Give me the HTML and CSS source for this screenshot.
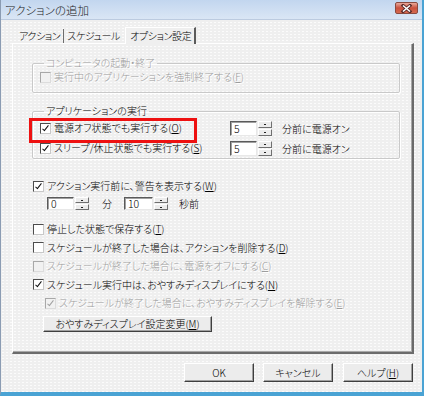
FILE: index.html
```html
<!DOCTYPE html>
<html lang="ja">
<head>
  <meta charset="UTF-8">
  <title>アクションの追加</title>
  <link rel="stylesheet" href="styles.css">
</head>
<body>
  <div class="window">
    <div class="titlebar">
      <span class="title">アクションの追加</span>
      <span class="close-btn">
        <svg width="13" height="9" viewBox="0 0 13 9">
          <path d="M3 1.5 L10 7.5 M10 1.5 L3 7.5" stroke="#5a2a2a" stroke-width="3.2" stroke-linecap="square"/>
          <path d="M3 1.5 L10 7.5 M10 1.5 L3 7.5" stroke="#fff" stroke-width="1.6"/>
        </svg>
      </span>
    </div>

    <div class="client">
      <!-- Tabs -->
      <div class="tabs">
        <span class="tab">アクション</span>
        <span class="tab">スケジュール</span>
        <span class="tab active">オプション設定</span>
      </div>

      <div class="panel">
        <fieldset class="group">
          <legend class="disabled">コンピュータの起動・終了</legend>
          <label class="check disabled"><span class="box"></span>実行中のアプリケーションを強制終了する(<u>F</u>)</label>
        </fieldset>

        <fieldset class="group">
          <legend>アプリケーションの実行</legend>
          <div class="app-row">
            <label class="check highlight"><span class="box checked"></span>電源オフ状態でも実行する(<u>O</u>)</label>
            <div class="spinner">
              <span class="field">5</span>
              <span class="spin-btns"><span class="up"></span><span class="down"></span></span>
            </div>
            <span class="unit">分前に電源オン</span>
          </div>
          <div class="app-row">
            <label class="check"><span class="box checked"></span>スリープ/休止状態でも実行する(<u>S</u>)</label>
            <div class="spinner">
              <span class="field">5</span>
              <span class="spin-btns"><span class="up"></span><span class="down"></span></span>
            </div>
            <span class="unit">分前に電源オン</span>
          </div>
        </fieldset>

        <label class="check row warn"><span class="box checked"></span>アクション実行前に、警告を表示する(<u>W</u>)</label>
        <div class="time-row">
          <div class="spinner">
            <span class="field">0</span>
            <span class="spin-btns"><span class="up"></span><span class="down"></span></span>
          </div>
          <span class="unit-min">分</span>
          <div class="spinner">
            <span class="field">10</span>
            <span class="spin-btns"><span class="up"></span><span class="down"></span></span>
          </div>
          <span class="unit-sec">秒前</span>
        </div>

        <div class="options">
          <label class="check row"><span class="box"></span>停止した状態で保存する(<u>T</u>)</label>
          <label class="check row"><span class="box"></span>スケジュールが終了した場合は、アクションを削除する(<u>D</u>)</label>
          <label class="check row disabled"><span class="box"></span>スケジュールが終了した場合に、電源をオフにする(<u>C</u>)</label>
          <label class="check row"><span class="box checked"></span>スケジュール実行中は、おやすみディスプレイにする(<u>N</u>)</label>
          <label class="check row sub disabled"><span class="box checked"></span>スケジュールが終了した場合に、おやすみディスプレイを解除する(<u>E</u>)</label>
        </div>
        <button class="btn display-btn">おやすみディスプレイ設定変更(<u>M</u>)</button>
      </div>

      <div class="actions">
        <button class="btn">OK</button>
        <button class="btn">キャンセル</button>
        <button class="btn">ヘルプ(<u>H</u>)</button>
      </div>
    </div>
  </div>
</body>
</html>
```

FILE: styles.css
```css
* {
  box-sizing: border-box;
}

body {
  margin: 0;
  font-family: "Noto Sans CJK JP", "Noto Sans", sans-serif;
  font-size: 10px;
  font-weight: 300;
  font-feature-settings: "palt";
  color: #000;
  background: #fff;
}

.window {
  width: 424px;
  height: 396px;
  display: flex;
  flex-direction: column;
  background-color: #efefef;
  background-image: radial-gradient(circle, #fbfbfb 0.7px, transparent 0.8px);
  background-size: 4px 3px;
  border-left: 1px solid #8b9cb3;
  border-right: 2px solid #4aa3d4;
  border-bottom: 4px solid #4aa3d4;
}

.titlebar {
  height: 20px;
  display: flex;
  align-items: center;
  justify-content: space-between;
  padding: 0 4px 0 4px;
  background: linear-gradient(#c2d6ef, #dae6f5);
  border-bottom: 1px solid #bccbe0;
}

.title {
  font-size: 11.5px;
  line-height: 14px;
  color: #1a1a1a;
}

.close-btn {
  width: 23px;
  height: 12px;
  margin-top: -3px;
  display: flex;
  align-items: center;
  justify-content: center;
  border: 1px solid #8a4a40;
  border-radius: 2px;
  background: linear-gradient(#e9a99b, #c9503e 50%, #d66a4f);
}

.client {
  flex: 1;
  padding: 6px 8px 0 11px;
  display: flex;
  flex-direction: column;
}

/* Tabs */
.tabs {
  display: flex;
  align-items: flex-end;
  height: 17px;
  padding-left: 4px;
}

.tab {
  height: 14px;
  line-height: 14px;
  padding: 0 3px 0 3px;
  font-size: 10px;
  letter-spacing: -0.4px;
}

.tab:first-child {
  border-right: 1px solid #6d6d6d;
}

.tab.active {
  height: 17px;
  line-height: 16px;
  margin-left: 2px;
  margin-bottom: -1px;
  padding: 0 3px 0 4px;
  border-left: 1px solid #fff;
  border-top: 1px solid #fff;
  border-right: 2px solid #5b5b5b;
  background: #efefef;
  position: relative;
  z-index: 1;
}

.panel {
  width: 402px;
  height: 311px;
  padding: 12px 12px 0 19px;
  border: 1px solid #fff;
  border-right: 2px solid #6b6b6b;
  border-bottom: 2px solid #6b6b6b;
  box-shadow: inset -1px -1px #a8a8a8;
}

/* Group boxes */
.group {
  margin: 0;
  padding: 0 0 8px 7px;
  border: 1px solid #c9c9c9;
  border-radius: 2px;
  box-shadow: 1px 1px #fff, inset 1px 1px #fff;
}

.group + .group {
  margin-top: 11px;
  padding-bottom: 0;
}

.group legend {
  padding: 0 2px;
  margin-left: 4px;
  line-height: 14px;
}

.disabled {
  color: #9d9d9d;
  text-shadow: 1px 1px #fff;
}

/* Check boxes */
.check {
  display: flex;
  align-items: center;
  height: 14px;
  line-height: 14px;
  white-space: nowrap;
}

.box {
  width: 11px;
  height: 11px;
  margin-right: 3px;
  flex: none;
  background: #fff;
  border: 1px solid;
  border-color: #4d4d4d #c8c8c8 #c8c8c8 #4d4d4d;
  position: relative;
}

.box.checked::after {
  content: "";
  position: absolute;
  left: 3px;
  top: 0px;
  width: 2px;
  height: 6px;
  border: solid #111;
  border-width: 0 1.5px 1.5px 0;
  transform: rotate(38deg);
}

.disabled .box {
  background: #f1f1f1;
  border-color: #a8a8a8 #dcdcdc #dcdcdc #a8a8a8;
}

.disabled .box.checked::after {
  border-color: #a0a0a0;
}

.app-row {
  display: flex;
  align-items: center;
  height: 20px;
}

.app-row .check {
  width: 190px;
}

.highlight {
  position: relative;
}

.highlight::before {
  content: "";
  position: absolute;
  left: -11px;
  top: -3px;
  width: 162px;
  height: 19px;
  border: 3px solid #ee1111;
}

/* Spinners */
.spinner {
  display: flex;
  align-items: center;
  gap: 1px;
}

.field {
  width: 27px;
  height: 15px;
  line-height: 13px;
  padding-left: 3px;
  font-size: 10.5px;
  background: #fff;
  border: 1px solid;
  border-color: #5a5a5a #e8e8e8 #e8e8e8 #5a5a5a;
  box-shadow: inset 1px 1px #a0a0a0;
}

.spin-btns {
  width: 14px;
  height: 15px;
  display: flex;
  flex-direction: column;
  gap: 1px;
}

.spin-btns span {
  flex: 1;
  position: relative;
  background: #ececec;
  border: 1px solid;
  border-color: #fff #707070 #707070 #fff;
}

.spin-btns span::after {
  content: "";
  position: absolute;
  left: 5px;
  top: 2px;
  width: 2px;
  height: 1px;
  background: #222;
}

.unit {
  margin-left: 10px;
}

.row {
  margin-left: 1px;
}

.warn {
  margin-top: 18px;
  height: 18px;
}

.time-row {
  display: flex;
  align-items: center;
  height: 14px;
  margin-top: 1px;
  padding-left: 15px;
}

.time-row .field {
  height: 13px;
  line-height: 11px;
}

.time-row .spin-btns {
  height: 13px;
}

.time-row .spinner:nth-of-type(2) .field {
  width: 29px;
}

.unit-min {
  margin: 0 12px 0 13px;
}

.unit-sec {
  margin-left: 11px;
}

.options {
  margin-top: 10px;
}

.options .check {
  height: 18.5px;
}

.options .sub {
  margin-left: 13px;
}

/* Buttons */
.btn {
  font-family: inherit;
  font-size: 10px;
  font-weight: 300;
  font-feature-settings: "palt";
  color: #000;
  background: #ececec;
  border: 1px solid;
  border-color: #fff #3f3f3f #3f3f3f #fff;
  box-shadow: inset -1px -1px #a0a0a0;
  padding: 0;
  cursor: pointer;
}

.display-btn {
  display: block;
  width: 169px;
  height: 16px;
  margin: 3px 0 0 11px;
  line-height: 13px;
}

.actions {
  display: flex;
  justify-content: flex-end;
  gap: 9px;
  margin-top: 9px;
  padding-right: 1px;
}

.actions .btn {
  width: 70px;
  height: 19px;
}

.actions .btn:last-child {
  margin-left: 1px;
}
```
